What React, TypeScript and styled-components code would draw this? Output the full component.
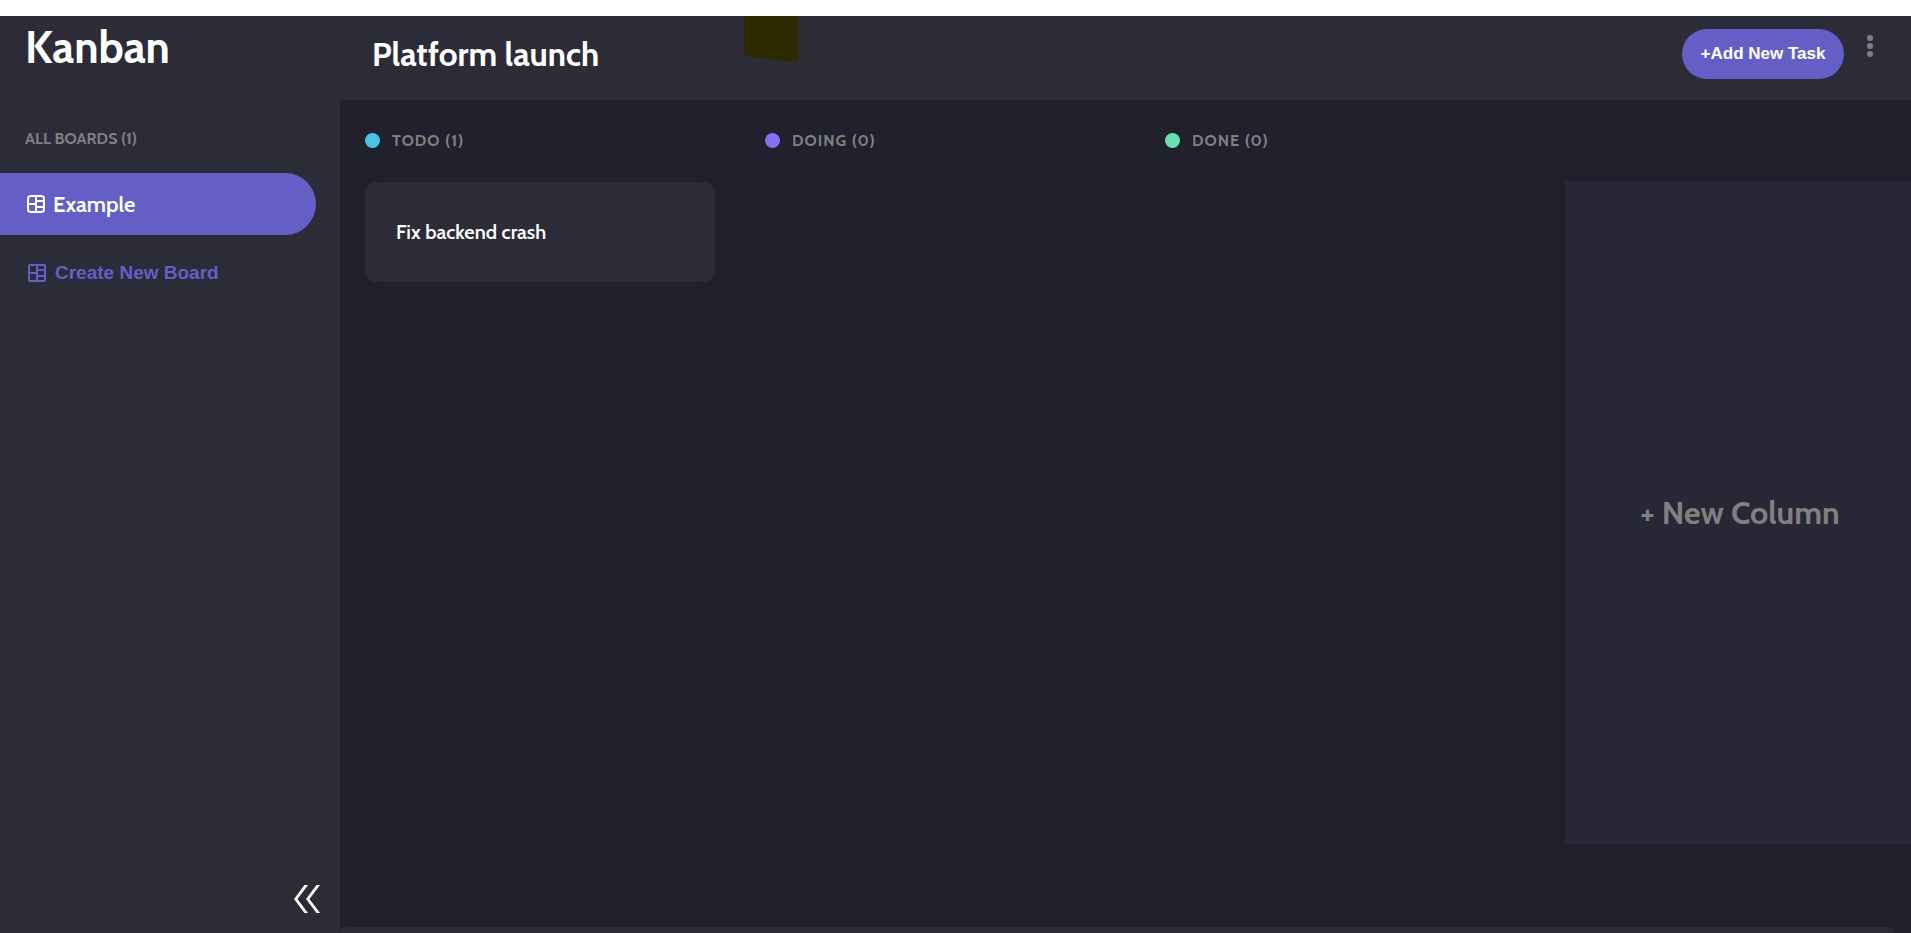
import React from "react";
import styled, { createGlobalStyle } from "styled-components";

const GlobalStyle = createGlobalStyle`
  * { box-sizing: border-box; }
  html, body, #root { height: 100%; }
  body {
    margin: 0;
    background: #ffffff;
    color: #ffffff;
    font-family: Cabin, Lato, sans-serif;
    overflow: hidden;
  }
  h1, h2, h3, p, ul { margin: 0; padding: 0; }
  ul { list-style: none; }
  button { border: 0; padding: 0; background: none; color: inherit; cursor: pointer; }
`;

const Page = styled.div`
  display: flex;
  height: 100vh;
  padding-top: 16px;
`;

const Sidebar = styled.aside`
  display: flex;
  flex-direction: column;
  flex: 0 0 340px;
  background: #2c2c38;
`;

const Logo = styled.h1`
  padding: 4px 0 0 25px;
  font-size: 44px;
  line-height: 56px;
  font-weight: 700;
`;

const BoardsHeading = styled.h2`
  padding: 52px 0 24px 25px;
  font-size: 16px;
  line-height: 21px;
  font-weight: 700;
  color: #808080;
`;

const BoardList = styled.nav`
  display: flex;
  flex-direction: column;
  align-items: flex-start;
  gap: 24px;
`;

const BoardLink = styled.a`
  display: flex;
  align-items: center;
  gap: 8px;
  width: 316px;
  height: 62px;
  padding-left: 27px;
  border-radius: 0 31px 31px 0;
  background: #635fc7;
  color: #ffffff;
  font-size: 22px;
  font-weight: 600;
  text-decoration: none;
`;

const CreateBoard = styled.button`
  display: flex;
  align-items: center;
  gap: 9px;
  height: 28px;
  padding: 0 0 0 28px;
  color: #635fc7;
  font-family: "Liberation Sans", Arial, sans-serif;
  font-size: 19px;
  font-weight: 700;
`;

const Collapse = styled.button`
  align-self: flex-end;
  display: flex;
  margin: auto 20px 20px 0;
`;

const Main = styled.main`
  display: flex;
  flex-direction: column;
  flex: 1;
  min-width: 0;
  background: #21212d;
`;

const Header = styled.header`
  position: relative;
  display: flex;
  align-items: flex-start;
  flex: 0 0 84px;
  padding: 13px 37px 0 32px;
  background: #2c2c38;
`;

const Title = styled.h2`
  flex: 1;
  font-size: 33px;
  line-height: 50px;
  font-weight: 700;
`;

const Mark = styled.svg`
  position: absolute;
  top: 0;
  left: 403px;
`;

const AddTask = styled.button`
  width: 162px;
  height: 50px;
  border-radius: 25px;
  background: #635fc7;
  font-family: "Liberation Sans", Arial, sans-serif;
  font-size: 17px;
  font-weight: 700;
`;

const Menu = styled.button`
  display: flex;
  margin: 5px 0 0 22px;
`;

const Board = styled.div`
  display: flex;
  gap: 50px;
  flex: 1;
  min-height: 0;
  padding: 30px 0 0 25px;
  overflow: hidden;
`;

const Column = styled.section`
  flex: 0 0 350px;
`;

const ColumnTitle = styled.h3`
  display: flex;
  align-items: center;
  gap: 12px;
  height: 21px;
  margin-bottom: 31px;
  color: #808080;
  font-size: 16px;
  font-weight: 700;
  letter-spacing: 1px;
`;

const Dot = styled.span<{ $color: string }>`
  width: 15px;
  height: 15px;
  border-radius: 50%;
  background: ${(p) => p.$color};
`;

const Card = styled.li`
  display: flex;
  align-items: center;
  height: 100px;
  padding: 0 31px;
  border-radius: 12px;
  background: #2c2c38;
  font-size: 20px;
  font-weight: 600;
`;

const NewColumn = styled.button`
  flex: 0 0 350px;
  margin: 51px 0 83px;
  background: #282736;
  color: #808080;
  font-family: inherit;
  font-size: 32px;
  font-weight: 700;
`;

const ScrollTrack = styled.div`
  flex: 0 0 6px;
  padding-right: 17px;
`;

const ScrollThumb = styled.div`
  height: 100%;
  border-radius: 6px 6px 0 0;
  background: #2c2c38;
`;

const BoardIcon = ({ round = 1 }: { round?: number }) => (
  <svg width="18" height="18" viewBox="0 0 18 18" fill="none" stroke="currentColor" strokeWidth="2" aria-hidden="true">
    <rect x="1" y="1" width="16" height="16" rx={round} />
    <path d="M9 1v16M1 9h8M9 6h8M9 12h8" />
  </svg>
);

const columns = [
  { name: "TODO", color: "#49c4e5", tasks: ["Fix backend crash"] },
  { name: "DOING", color: "#8471f2", tasks: [] as string[] },
  { name: "DONE", color: "#67e2ae", tasks: [] as string[] },
];

export default function App() {
  return (
    <>
      <GlobalStyle />
      <Page>
        <Sidebar>
          <Logo>Kanban</Logo>
          <BoardsHeading>ALL BOARDS (1)</BoardsHeading>
          <BoardList>
            <BoardLink href="#example">
              <BoardIcon round={3} />
              Example
            </BoardLink>
            <CreateBoard type="button">
              <BoardIcon />
              Create New Board
            </CreateBoard>
          </BoardList>
          <Collapse type="button" aria-label="Hide sidebar">
            <svg width="26" height="28" viewBox="0 0 26 28" fill="#fff">
              <path d="M10.500 0H14L3.500 14L14 28H10.500L0 14ZM22.500 0H26L15.500 14L26 28H22.500L12 14Z" />
            </svg>
          </Collapse>
        </Sidebar>
        <Main>
          <Header>
            <Title>Platform launch</Title>
            <Mark width="56" height="45" viewBox="0 0 56 45" aria-hidden="true">
              <path d="M1 0H55.500V45H37L0.500 39Z" fill="#2d2a00" />
            </Mark>
            <AddTask type="button">+Add New Task</AddTask>
            <Menu type="button" aria-label="Board menu">
              <svg width="8" height="24" viewBox="0 0 8 24" fill="#808080">
                <circle cx="4" cy="4" r="3" />
                <circle cx="4" cy="12" r="3" />
                <circle cx="4" cy="20" r="3" />
              </svg>
            </Menu>
          </Header>
          <Board>
            {columns.map((c) => (
              <Column key={c.name}>
                <ColumnTitle>
                  <Dot $color={c.color} />
                  {`${c.name} (${c.tasks.length})`}
                </ColumnTitle>
                <ul>
                  {c.tasks.map((t) => (
                    <Card key={t}>{t}</Card>
                  ))}
                </ul>
              </Column>
            ))}
            <NewColumn type="button">+ New Column</NewColumn>
          </Board>
          <ScrollTrack>
            <ScrollThumb />
          </ScrollTrack>
        </Main>
      </Page>
    </>
  );
}
